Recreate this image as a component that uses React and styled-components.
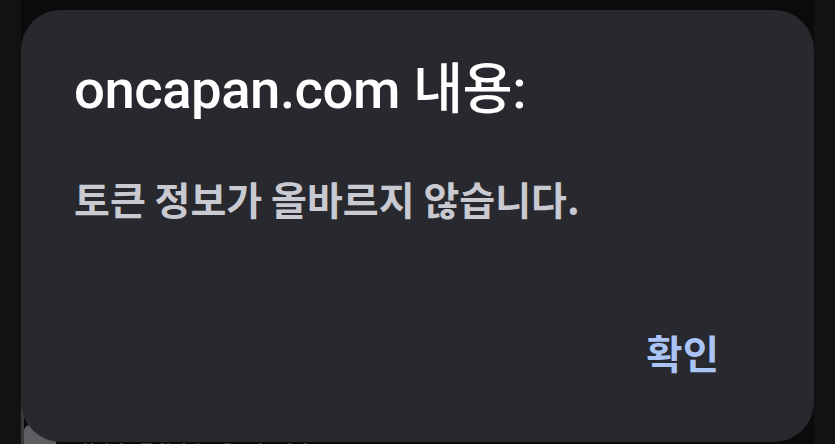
import React from 'react';
import styled, { createGlobalStyle } from 'styled-components';

const GlobalStyle = createGlobalStyle`
  html, body {
    margin: 0;
    padding: 0;
    background: #111212;
  }
  body {
    font-family: Roboto, "Noto Sans CJK KR", sans-serif;
  }
`;

const Screen = styled.div`
  height: 444px;
  overflow: hidden;
  display: flex;
  justify-content: center;
  background: #111212;
`;

const Column = styled.div`
  position: relative;
  width: 793px;
  background: #0b0b0b;
`;

const Behind = styled.div`
  display: flex;
  flex-direction: column;
  padding-top: 400px;
`;

const BehindRow = styled.div`
  border-left: 3px solid #3a3b3d;
  height: 44px;
  display: flex;
  align-items: flex-start;
  gap: 24px;
  padding: 25px 0 0 0;
  box-sizing: border-box;
`;

const BehindIcon = styled.span`
  width: 32px;
  height: 32px;
  border-radius: 6px;
  background: #5d5e61;
`;

const BehindText = styled.span`
  margin-top: 15px;
  font-size: 16px;
  line-height: 20px;
  color: #6a6b6e;
  font-family: "Noto Sans CJK KR", sans-serif;
  font-weight: 700;
`;

const Dialog = styled.div`
  position: absolute;
  top: 10px;
  left: 0;
  right: 0;
  height: 432px;
  background: #28292e;
  border-radius: 40px;
  padding: 0 53px;
  box-sizing: border-box;
  display: flex;
  flex-direction: column;
`;

const Title = styled.h2`
  margin: 47px 0 0;
  font-family: Roboto, "Noto Sans CJK KR", sans-serif;
  font-size: 54.5px;
  font-weight: 500;
  color: #ffffff;
  line-height: 64px;
  letter-spacing: -0.5px;
`;

const Message = styled.p`
  margin: 53px 0 0;
  font-family: "Noto Sans CJK KR", sans-serif;
  font-size: 39px;
  font-weight: 700;
  color: #c8c9d1;
  line-height: 48px;
`;

const Actions = styled.div`
  margin-top: auto;
  margin-bottom: 66px;
  display: flex;
  justify-content: flex-end;
  padding-right: 42px;
`;

const ActionButton = styled.button`
  border: none;
  background: none;
  padding: 0;
  font-family: "Noto Sans CJK KR", sans-serif;
  font-size: 39.5px;
  font-weight: 700;
  color: #a9c4f5;
  line-height: 48px;
  cursor: pointer;
`;

export default function App() {
  return (
    <>
      <GlobalStyle />
      <Screen>
        <Column>
          <Behind>
            <BehindRow>
              <BehindIcon />
              <BehindText>회원정보를 확인해주세요 바로가기</BehindText>
            </BehindRow>
          </Behind>
          <Dialog role="alertdialog">
            <Title>oncapan.com 내용:</Title>
            <Message>토큰 정보가 올바르지 않습니다.</Message>
            <Actions>
              <ActionButton>확인</ActionButton>
            </Actions>
          </Dialog>
        </Column>
      </Screen>
    </>
  );
}
